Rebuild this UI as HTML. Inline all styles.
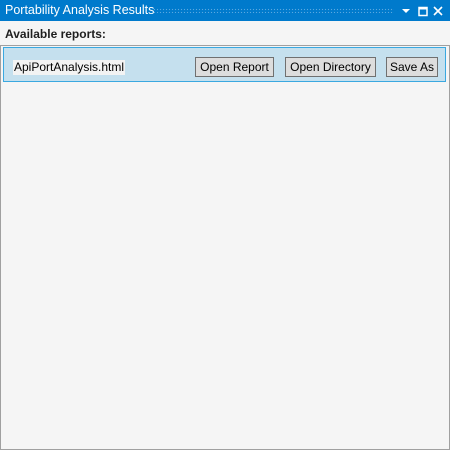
<!DOCTYPE html>
<html><head><style>
body{margin:0;width:450px;height:450px;background:#f5f5f5;font-family:"Segoe UI","Liberation Sans",sans-serif;font-size:12px;overflow:hidden;position:relative}
.title{position:absolute;left:0;top:0;width:450px;height:21px;background:#007acc;color:#fff}
.title span{position:absolute;left:5px;top:3px;font-size:12.5px}
.dots{position:absolute;left:153px;top:8px;width:241px;height:5px;background-image:radial-gradient(circle,#5aa8e0 0.7px,transparent 0.8px);background-size:3px 3px}
.lbl{position:absolute;left:5px;top:27px;font-weight:bold;color:#1e1e1e}
.list{position:absolute;left:0;top:45px;width:448px;height:403px;border:1px solid #a0a0a0;background:#f5f5f5}
.item{position:absolute;left:2px;top:1px;width:441px;height:33px;border:1px solid #3aa8e0;background:#c5e0ee}
.fn{position:absolute;left:9px;top:12px;background:#f3f3f3;color:#000;padding:0 1px;line-height:15px}
.btn{position:absolute;top:9px;height:18px;border:1px solid #707070;background:#dddddd;color:#000;text-align:center;line-height:19px;box-sizing:content-box}
</style></head><body>
<div class="title"><span>Portability Analysis Results</span><div class="dots"></div>
<svg style="position:absolute;left:400px;top:6px" width="48" height="12">
<path d="M2 3h8l-4 4z" fill="#fff"/>
<rect x="19" y="1.5" width="8" height="8" fill="none" stroke="#fff" stroke-width="1.5"/><rect x="19" y="1" width="8" height="2.5" fill="#fff"/>
<path d="M34 1l8 8M42 1l-8 8" stroke="#fff" stroke-width="1.6"/>
</svg></div>
<div class="lbl">Available reports:</div>
<div class="list"><div class="item">
<div class="fn">ApiPortAnalysis.html</div>
<div class="btn" style="left:191px;width:77px">Open Report</div>
<div class="btn" style="left:281px;width:89px">Open Directory</div>
<div class="btn" style="left:382px;width:50px">Save As</div>
</div></div>
</body></html>
